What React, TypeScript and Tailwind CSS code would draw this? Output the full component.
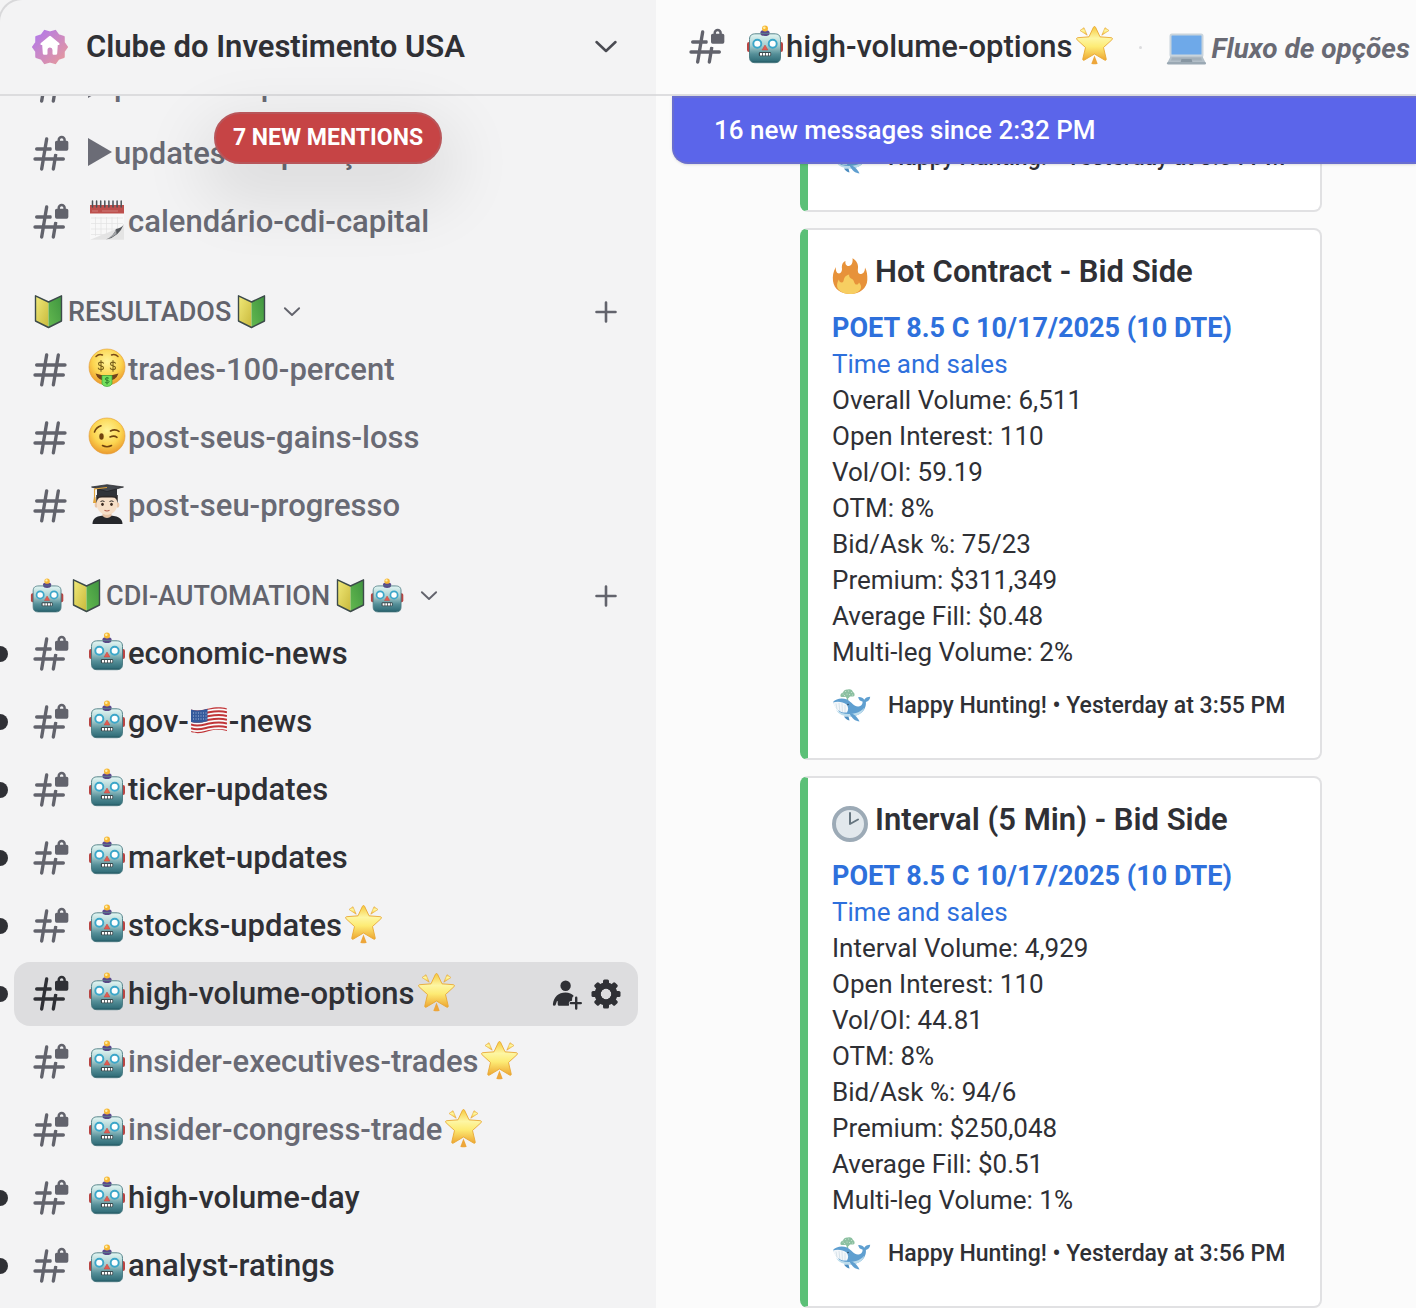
import type { ReactNode } from 'react';

type IconProps = { className?: string };

/* ---------- shared gradients ---------- */

function Gradients() {
  return (
    <svg aria-hidden="true" width="0" height="0" className="absolute">
      <defs>
        <linearGradient id="g-robot" x1="0" y1="0" x2="0" y2="1">
          <stop offset="0" stopColor="#e2f6f3" />
          <stop offset="0.4" stopColor="#a9cfd0" />
          <stop offset="0.7" stopColor="#558f98" />
          <stop offset="0.93" stopColor="#34707b" />
          <stop offset="1" stopColor="#1f525d" />
        </linearGradient>
        <linearGradient id="g-star" x1="0" y1="0" x2="0" y2="1">
          <stop offset="0" stopColor="#f6c93c" />
          <stop offset="0.35" stopColor="#fdf6a4" />
          <stop offset="0.6" stopColor="#fdeb74" />
          <stop offset="1" stopColor="#eda531" />
        </linearGradient>
        <radialGradient id="g-face" cx="0.5" cy="0.35" r="0.65">
          <stop offset="0" stopColor="#fff59a" />
          <stop offset="0.6" stopColor="#fcd550" />
          <stop offset="1" stopColor="#eb9a2d" />
        </radialGradient>
        <linearGradient id="g-leaf-l" x1="0" y1="0" x2="1" y2="1">
          <stop offset="0" stopColor="#f1ea79" />
          <stop offset="1" stopColor="#c9b93c" />
        </linearGradient>
        <linearGradient id="g-leaf-r" x1="1" y1="0" x2="0" y2="1">
          <stop offset="0" stopColor="#3f9440" />
          <stop offset="1" stopColor="#63b94f" />
        </linearGradient>
        <linearGradient id="g-badge" x1="0" y1="0" x2="1" y2="1">
          <stop offset="0.1" stopColor="#b57be6" />
          <stop offset="0.9" stopColor="#e397a0" />
        </linearGradient>
      </defs>
    </svg>
  );
}

/* ---------- interface icons ---------- */

function HashIcon({ className = '' }: IconProps) {
  return (
    <svg aria-hidden="true" viewBox="0 0 24 24" fill="currentColor" className={`size-10 shrink-0 ${className}`}>
      <path
        fillRule="evenodd"
        d="M10.99 3.16A1 1 0 1 0 9 2.84L8.15 8H4a1 1 0 0 0 0 2h3.82l-.67 4H3a1 1 0 1 0 0 2h3.82l-.8 4.84a1 1 0 0 0 1.97.32L8.85 16h4.97l-.8 4.84a1 1 0 0 0 1.97.32l.86-5.16H20a1 1 0 1 0 0-2h-3.82l.67-4H21a1 1 0 1 0 0-2h-3.82l.8-4.84a1 1 0 1 0-1.97-.32L15.15 8h-4.97l.8-4.84ZM14.15 14l.67-4H9.85l-.67 4h4.97Z"
      />
    </svg>
  );
}

function LockedHashIcon({ className = '' }: IconProps) {
  return (
    <svg aria-hidden="true" viewBox="0 0 24 24" fill="currentColor" className={`size-10 shrink-0 ${className}`}>
      <path
        fillRule="evenodd"
        d="M16 4h.5v-.5a2.5 2.5 0 0 1 5 0V4h.5a1 1 0 0 1 1 1v4a1 1 0 0 1-1 1h-6a1 1 0 0 1-1-1V5a1 1 0 0 1 1-1Zm4-.5V4h-2v-.5a1 1 0 1 1 2 0Z"
      />
      <path d="M12.5 8c.28 0 .5.22.5.5V9c0 .1 0 .2.02.31.03.34-.21.69-.56.69H9.85l-.67 4h4.97l.28-1.68c.06-.34.44-.52.77-.43a3 3 0 0 0 .8.11c.27 0 .47.24.43.5l-.25 1.5H20a1 1 0 1 1 0 2h-4.15l-.86 5.16a1 1 0 0 1-1.98-.32l.8-4.84H8.86l-.86 5.16A1 1 0 0 1 6 20.84L6.82 16H3a1 1 0 1 1 0-2h4.15l.67-4H4a1 1 0 1 1 0-2h4.15l.86-5.16a1 1 0 1 1 1.98.32L10.19 8h2.31Z" />
    </svg>
  );
}

function ChevronDown({ className = '' }: IconProps) {
  return (
    <svg aria-hidden="true" viewBox="0 0 24 24" fill="none" stroke="currentColor" strokeLinecap="round" strokeLinejoin="round" className={className}>
      <path d="M2.500 7L12 16L21.500 7" strokeWidth="2.500" />
    </svg>
  );
}

function PlusIcon({ className = '' }: IconProps) {
  return (
    <svg aria-hidden="true" viewBox="0 0 24 24" fill="none" stroke="currentColor" strokeLinecap="round" className={className}>
      <path d="M12 2.500V21.500M2.500 12H21.500" strokeWidth="2.600" />
    </svg>
  );
}

function InviteIcon() {
  return (
    <svg aria-hidden="true" viewBox="0 0 32 32" fill="currentColor" className="size-8">
      <circle cx="15.600" cy="7.700" r="5.200" />
      <path d="M15.500 14.500c-7 0-11.600 4.500-12.600 11.400-.1 1 .4 1.900 1.400 1.900.8 0 1.200-.4 1.500-1.200l1.100-3.300c.2-.5.8-.4.8.2v2.800c0 .9.600 1.500 1.500 1.500h8.800c1 0 1.300-.7 1-1.500-.6-1.700.3-3.200 2.300-3.200.5 0 .8-.3.800-.8v-1c0-1.700.8-2.800 1.700-3.200-1.800-2.300-4.600-3.600-8.300-3.600Z" />
      <path d="M26.200 19.700v10.800M20.800 25.100h10" fill="none" stroke="currentColor" strokeWidth="2.400" strokeLinecap="round" />
    </svg>
  );
}

function GearIcon() {
  return (
    <svg aria-hidden="true" viewBox="0 0 32 32" fill="currentColor" className="size-8">
      {[0, 45, 90, 135].map((angle) => (
        <rect key={angle} x="13" y="1.500" width="6" height="29" rx="1.500" transform={`rotate(${angle} 16 16)`} mask="url(#gear-hole)" />
      ))}
      <mask id="gear-hole" maskUnits="userSpaceOnUse" x="-8" y="-8" width="48" height="48">
        <rect x="-8" y="-8" width="48" height="48" fill="white" />
        <circle cx="16" cy="16" r="5.400" fill="black" />
      </mask>
      <circle cx="16" cy="16" r="8.400" fill="none" stroke="currentColor" strokeWidth="6" />
    </svg>
  );
}

const badgePoints = Array.from({ length: 20 }, (_, i) => {
  const radius = i % 2 === 0 ? 17 : 14.5;
  const angle = (i * Math.PI) / 10;
  return `${(18 + radius * Math.cos(angle)).toFixed(2)},${(18 + radius * Math.sin(angle)).toFixed(2)}`;
}).join(' ');

function ServerBadge() {
  return (
    <svg aria-hidden="true" viewBox="0 0 36 36" className="size-9 shrink-0">
      <polygon points={badgePoints} fill="url(#g-badge)" stroke="url(#g-badge)" strokeWidth="2" strokeLinejoin="round" />
      <path
        d="M17.100 7.200a1.300 1.300 0 0 1 1.800 0l8.200 6.700c.9.800.5 2.100-.7 2.100h-.6l-.6 8.400a1.500 1.500 0 0 1-1.500 1.400H21.500a1 1 0 0 1-1-1v-3.800a2.500 2.500 0 0 0-5 0v3.800a1 1 0 0 1-1 1h-2.200a1.500 1.500 0 0 1-1.500-1.400l-.6-8.400h-.6c-1.200 0-1.600-1.300-.7-2.100Z"
        fill="white"
      />
    </svg>
  );
}

/* ---------- emoji drawings ---------- */

function Robot({ className = 'size-10 -mt-1' }: IconProps) {
  return (
    <svg role="img" aria-label="robot" viewBox="0 0 40 40" className={`shrink-0 ${className}`}>
      <rect x="1" y="17" width="5" height="10" rx="2" fill="#b94543" />
      <rect x="32" y="17" width="5" height="10" rx="2" fill="#b94543" />
      <ellipse cx="19" cy="7.500" rx="4.600" ry="2.600" fill="#5b4a8c" />
      <circle cx="19" cy="3.500" r="3" fill="#f7b733" />
      <circle cx="18.300" cy="2.700" r="1.300" fill="#fff0a8" />
      <path d="M3.500 14.500c0-4.500 2.500-5.700 6.500-5.700h18c4 0 6.500 1.200 6.500 5.700v17.500c0 4.200-2 5.700-6 5.700h-19c-4 0-6-1.500-6-5.700Z" fill="url(#g-robot)" stroke="#477880" strokeWidth="0.900" />
      <path d="M14.500 9h9c-.5 1.500-2 2.100-4.500 2.100s-4-.6-4.500-2.100Z" fill="#584a86" />
      <circle cx="11.300" cy="18.800" r="4" fill="#fff" stroke="#3ba6c9" strokeWidth="1.900" />
      <circle cx="26.700" cy="18.800" r="4" fill="#fff" stroke="#3ba6c9" strokeWidth="1.900" />
      <path d="M19 20l2.900 5h-5.800Z" fill="#e35b51" stroke="#c4453f" strokeWidth="0.500" />
      <rect x="12.800" y="27" width="12.400" height="4.300" rx="1.400" fill="#39474b" />
      <path d="M14 29.200h2.200M17 29.200h2.200M20 29.200h2.200M23 29.200h1.300" stroke="#fff" strokeWidth="2.500" />
    </svg>
  );
}

function Star() {
  return (
    <svg role="img" aria-label="glowing star" viewBox="0 0 40 40" className="-mt-1 ml-0.5 size-10 shrink-0">
      <g fill="url(#g-star)" stroke="#e5a63a" strokeWidth="0.600" strokeLinejoin="round">
        <path d="M5 5.500L9 2.700l3.200 7.500Z" />
        <path d="M34 5.500L30 2.700l-3.200 7.500Z" />
      </g>
      <path d="M19.500 30.500l3.200 8.200q-3.200 1-6.400 0Z" fill="#eda63a" />
      <path
        d="M19.500 1.500c.7 0 1 .6 1.300 1.300l4.200 9 11.200.9c1.400.1 1.700 1.200.7 2.100l-8.400 7.700 2.700 11.300c.3 1.300-.6 1.900-1.700 1.200l-10-6-10 6c-1.100.7-2 .1-1.700-1.200l2.700-11.300-8.400-7.700c-1-.9-.7-2 .7-2.100l11.200-.9 4.200-9c.3-.7.6-1.300 1.300-1.300Z"
        fill="url(#g-star)"
        stroke="#e9a834"
        strokeWidth="0.900"
      />
    </svg>
  );
}

function Leaf() {
  return (
    <svg role="img" aria-label="beginner symbol" viewBox="0 0 36 36" className="size-9 shrink-0">
      <path d="M5.500 1.800L18.500 8v25.500L5.500 27Z" fill="url(#g-leaf-l)" />
      <path d="M31.500 1.800L18.500 8v25.500L31.500 27Z" fill="url(#g-leaf-r)" />
      <path d="M5.500 1.800L18.500 8 31.500 1.800V27l-13 6.500-13-6.500Z" fill="none" stroke="#3c4a4a" strokeWidth="1.400" strokeLinejoin="round" />
    </svg>
  );
}

function MoneyFace() {
  return (
    <svg role="img" aria-label="money-mouth face" viewBox="0 0 40 40" className="-mt-1 size-10 shrink-0">
      <circle cx="19" cy="19" r="18" fill="url(#g-face)" stroke="#e29a35" strokeWidth="0.600" />
      <path d="M8 8.500q3-3 6.500-1.500M23.500 7q3.500-1.500 6.500 1.500" fill="none" stroke="#7a4a16" strokeWidth="1.400" strokeLinecap="round" />
      <g fill="none" stroke="#7b611b" strokeWidth="1.100" strokeLinecap="round">
        <path d="M15.400 15.200c-.4-1.500-4.900-1.700-4.900.7s5 1.300 5 3.800-4.800 2.200-5.200.4M13 12.500v10.800" />
        <path d="M27.400 15.200c-.4-1.500-4.900-1.700-4.900.7s5 1.300 5 3.800-4.800 2.200-5.200.4M25 12.500v10.800" />
      </g>
      <path d="M7.500 25.500q11.500 4 23 0-2.500 7.500-11.500 7.500T7.500 25.500Z" fill="#74431a" />
      <path d="M14 27.500h10v8.500q-1.500 2.500-5 2.500T14 36Z" fill="#74e05d" stroke="#3fa63b" strokeWidth="0.700" />
      <path d="M21 30.500c-.6-1.200-4-1-3.800.6s3.900.9 3.900 2.500-3.500 1.800-4.100.4M19 29v7.500" fill="none" stroke="#2b7a2b" strokeWidth="0.900" />
    </svg>
  );
}

function WinkFace() {
  return (
    <svg role="img" aria-label="winking face" viewBox="0 0 40 40" className="-mt-1 size-10 shrink-0">
      <circle cx="19" cy="20" r="18" fill="url(#g-face)" stroke="#e29a35" strokeWidth="0.600" />
      <ellipse cx="13.500" cy="20.500" rx="2.200" ry="3.200" fill="#70430f" />
      <path d="M6.500 16q1.500-4.500 6.500-6.200M22.500 15q4.500-2.500 8.500.3M22 21q4-2 7 .3M14.500 29.500q4.500 2.500 9 0" fill="none" stroke="#70430f" strokeWidth="1.600" strokeLinecap="round" />
    </svg>
  );
}

function Graduate() {
  return (
    <svg role="img" aria-label="student" viewBox="0 0 40 40" className="-mt-1 size-10 shrink-0">
      <path d="M4.500 40c0-6 4-8.500 14.500-8.500S34.500 34 34.500 40Z" fill="#25272b" />
      <path d="M14.500 27h9v5q-4.500 4-9 0Z" fill="#e5c0a3" />
      <path d="M8.500 11h21v9h-21Z" fill="#2c2725" />
      <ellipse cx="8.300" cy="21" rx="1.700" ry="2.700" fill="#e9c7aa" />
      <ellipse cx="29.700" cy="21" rx="1.700" ry="2.700" fill="#e9c7aa" />
      <path d="M9 14q10-3 20 0v7c0 6-5 9.800-10 9.800S9 27 9 21Z" fill="#f6dfc8" />
      <path d="M8.500 18q1-3.500 3-4.500h15q2 1 3 4.500V11h-21Z" fill="#2c2725" />
      <path d="M12.500 17.500q2-1.200 4 0M21.500 17.500q2-1.200 4 0" stroke="#2c2725" strokeWidth="1" fill="none" />
      <ellipse cx="14.500" cy="20.300" rx="1.300" ry="1.600" fill="#3a2a20" />
      <ellipse cx="23.500" cy="20.300" rx="1.300" ry="1.600" fill="#3a2a20" />
      <path d="M16.500 26.300q2.500 1.400 5 0" stroke="#b3614f" strokeWidth="1.200" fill="none" />
      <path d="M9 5h20v8q-10-2.500-20 0Z" fill="#303338" />
      <path d="M3.500 3L19 .7 35.500 3 19 7.500Z" fill="#43474d" stroke="#1f2125" strokeWidth="0.700" />
      <path d="M19 3.500L6.500 5v9" stroke="#e0a33a" strokeWidth="1.100" fill="none" />
      <path d="M6 13l-1 6h3.200l-.8-6Z" fill="#e0a33a" />
    </svg>
  );
}

function Calendar() {
  return (
    <svg role="img" aria-label="spiral calendar" viewBox="0 0 40 40" className="-mt-1 size-10 shrink-0">
      <path d="M2 13h34v13q-4 9-16 14H2Z" fill="#f8f8f8" />
      <path d="M2 39.700h34V26Z" fill="#e4e4e4" />
      <path d="M7.500 17v19M13 17v19M18.500 17v19M24 17v16M29.500 17v12M3 18h32M3 23.500h32M3 29h29M3 34.500h23" stroke="#e2e2e2" strokeWidth="0.700" />
      <path d="M36 24q-2 4-8 5-2 7-10 10.600Q31 37 36 24Z" fill="#55585c" />
      <path d="M28 29q-2 7-10 10.600 6-1.800 10.500-5.500Z" fill="#a4a6a9" />
      <rect x="2" y="5" width="34" height="8.500" fill="#bd504d" />
      <path d="M4 11h6M14 11h16" stroke="#cf7d7a" strokeWidth="1.200" />
      <path d="M4.500 1v6M8.600 1v6M12.700 1v6M16.800 1v6M20.900 1v6M25 1v6M29.100 1v6M33.200 1v6" stroke="#4c5258" strokeWidth="1.500" strokeLinecap="round" />
    </svg>
  );
}

function FlagUS() {
  return (
    <svg role="img" aria-label="US flag" viewBox="0 0 40 40" className="-mt-1 size-10 shrink-0">
      <clipPath id="flag-wave">
        <path d="M2 9.500C9 12 15 9.500 20 8.500S31 6.500 38 8.500V31c-7-2-13-1.500-18 0S9 34.500 2 32Z" />
      </clipPath>
      <g clipPath="url(#flag-wave)">
        <rect width="40" height="40" fill="#fafafa" />
        {[0, 1, 2, 3, 4, 5, 6].map((n) => (
          <path key={n} transform={`translate(0 ${n * 3.75})`} d="M2 9.500C9 12 15 9.500 20 8.500S31 6.500 38 8.500" fill="none" stroke="#c03538" strokeWidth="2.100" />
        ))}
        <path d="M2 9c6 2 11 .8 16.500-.8v13C13 22.500 8 23.700 2 22Z" fill="#345a9c" />
        <path d="M4 13h14M4 16h14M4 19h14" stroke="#b9c8e2" strokeWidth="0.900" strokeDasharray="1 1.500" />
      </g>
    </svg>
  );
}

function Play() {
  return (
    <svg role="img" aria-label="play" viewBox="0 0 26 32" className="-mt-1 h-8 w-[26px] shrink-0">
      <path d="M0 2L24 16 0 30Z" fill="#6b6c76" />
    </svg>
  );
}

function Laptop() {
  return (
    <svg role="img" aria-label="laptop" viewBox="0 0 40 32" className="h-8 w-10 shrink-0">
      <rect x="3.500" y="0.500" width="34" height="24" rx="2.500" fill="#c9d4dc" />
      <rect x="5.500" y="2.500" width="30" height="19" rx="0.500" fill="#6ea9e9" />
      <path d="M4.500 23.500h32l3 6H1.500Z" fill="#b3bfc8" />
      <path d="M6 24.500h29l1 3H5Z" fill="#a3b0ba" />
      <path d="M15.500 26h10l1 3.500h-12Z" fill="#8796a2" />
      <rect x="1" y="29" width="39" height="2.500" rx="1.200" fill="#9aa8b3" />
    </svg>
  );
}

function Fire() {
  return (
    <svg role="img" aria-label="fire" viewBox="0 0 36 36" className="mt-2 size-9 shrink-0">
      <path d="M4 9C1 14 .5 18 1 23c1 8 8 13 17 13 10 0 17-6 17.300-14C35.500 17 35 13 33 9.500c0 4.500-2 6.500-4.500 6.500s-3-3-2.500-6C26.500 6 24 2 20.500.3 21 4 20 8 16.500 8 14 8 13 5.500 13.500 3 10.500 4 9.500 7.500 10 11c0 2-1 4.500-3 4.500C4.500 15.500 3.500 12 4 9Z" fill="#e7923a" />
      <path d="M18 36C11 36 6 32.500 5.200 29c-.5-3 .3-5.500 1.800-7.500 0 2 1.500 3.500 3.200 3 1.800-.6 1.300-3 2.300-4.700 1-1.800 2.500-2.800 4.700-3.300-.5 2.500.8 3.500 2.800 4.500 2.500 1.300 2 5 4 5.500 1.500.4 2.500-.5 3-2 1.800 2 2.500 4 1.800 6C27.500 34 23 36 18 36Z" fill="#f7ce61" />
    </svg>
  );
}

function Clock() {
  return (
    <svg role="img" aria-label="clock" viewBox="0 0 36 36" className="mt-2 size-9 shrink-0">
      <circle cx="18" cy="18" r="16" fill="#e2e8ec" stroke="#9caab6" strokeWidth="4" />
      <path d="M18 7v11l8-4.500" fill="none" stroke="#66757f" strokeWidth="2" strokeLinecap="round" strokeLinejoin="round" />
    </svg>
  );
}

function Whale() {
  return (
    <svg role="img" aria-label="whale" viewBox="0 0 40 40" className="size-10 shrink-0">
      <path d="M8.500 10.500c-.5-2 .8-3.500 2.500-4C11.500 4 14 3 16 3.500c2.500-.8 4.500.5 5 2.500 1.500.7 2 2.500 1.300 4-1.500.8-3.300.3-4.300.5l-1.300 1.500h-1.900L13.500 10.700c-2 .3-3.500.6-5-.2Z" fill="#8cc0a1" />
      <path d="M11 8h.1M13.500 5.500h.1M16.500 5h.1M19.500 6.500h.1M15 8h.1M17.500 8.500h.1M20.500 9h.1M12.500 9.500h.1" stroke="#c9e3d2" strokeWidth="1.100" strokeLinecap="round" />
      <rect x="14.700" y="10" width="1.500" height="4" fill="#8cc0a1" />
      <path d="M1 16c3-3.500 9-4.500 14-2.500 5 2.600 7 7.500 11.500 7 3.500-.4 4.300-3 4-5-2.300-.4-4-1.600-4.300-4.500 2.600-.3 5 .8 6 2.700 1.200-2 3-3 6-3-.2 3-1.900 4.600-4.300 5.200.5 5.500-2.500 10.500-8.500 13-3.500 1.400-8 1.600-11.500.8C8.900 28.400 4.400 23.700 1 16Z" fill="#5f9fd0" />
      <path d="M4 24c5 4 13 5 20 3 3-1 6-2.500 8.500-5.500-1.500 5-5.500 8-11.500 8.700-7 .9-13.500-.7-17-6.200Z" fill="#bcdcec" />
      <path d="M1 16.500c5-1.500 10-.5 13.500 2 2 2 2.200 5 .5 8-6 .8-12.500-3-14-10Z" fill="#f3f7fa" />
      <path d="M4 17.500l1 6M7 17l.8 8M10 17.300l.4 8.800M13 19v7" stroke="#cfdde6" strokeWidth="0.800" fill="none" />
      <path d="M17.500 27c3.500.5 8 3.500 10 8.500-4-.2-8-3-10-8.500Z" fill="#5f9fd0" />
      <path d="M12 30.500c1 1.800 3 3.500 5.500 4l-1-4Z" fill="#4c8dc0" />
      <circle cx="16" cy="18.500" r="0.800" fill="#2c4a63" />
    </svg>
  );
}

/* ---------- sidebar ---------- */

type Channel = {
  id: string;
  label: ReactNode;
  open?: boolean;
  unread?: boolean;
  selected?: boolean;
};

const topChannels: Channel[] = [
  { id: 'portfolio', label: <><Play />portfolio-update</> },
  { id: 'updates', label: <><Play />updates-de-posições</> },
  { id: 'calendario', label: <><Calendar />calendário-cdi-capital</> },
];

const resultChannels: Channel[] = [
  { id: 'trades', open: true, label: <><MoneyFace />trades-100-percent</> },
  { id: 'gains', open: true, label: <><WinkFace />post-seus-gains-loss</> },
  { id: 'progresso', open: true, label: <><Graduate />post-seu-progresso</> },
];

const automationChannels: Channel[] = [
  { id: 'economic', unread: true, label: <><Robot />economic-news</> },
  { id: 'gov', unread: true, label: <><Robot />gov-<FlagUS />-news</> },
  { id: 'ticker', unread: true, label: <><Robot />ticker-updates</> },
  { id: 'market', unread: true, label: <><Robot />market-updates</> },
  { id: 'stocks', unread: true, label: <><Robot />stocks-updates<Star /></> },
  { id: 'options', unread: true, selected: true, label: <><Robot />high-volume-options<Star /></> },
  { id: 'executives', label: <><Robot />insider-executives-trades<Star /></> },
  { id: 'congress', label: <><Robot />insider-congress-trade<Star /></> },
  { id: 'day', unread: true, label: <><Robot />high-volume-day</> },
  { id: 'analyst', unread: true, label: <><Robot />analyst-ratings</> },
];

function ChannelRow({ channel }: { channel: Channel }) {
  const { id, label, open, unread, selected } = channel;
  const Icon = open ? HashIcon : LockedHashIcon;
  return (
    <li className="relative py-0.5 pr-[18px] pl-3.5">
      {unread && <span className="absolute top-1/2 left-0 h-4 w-2 -translate-y-1/2 rounded-r-full bg-[#2f3035]" />}
      <div className={`flex h-16 items-center rounded-2xl pr-4 ${selected ? 'bg-[#dddddf]' : ''}`}>
        <a
          href={`#${id}`}
          aria-current={selected ? 'page' : undefined}
          className={`flex h-full min-w-0 flex-1 items-center gap-[18px] pl-4 ${unread ? 'text-[#2f3035]' : 'text-[#696a74]'}`}
        >
          <Icon className={selected ? 'text-[#2f3035]' : 'text-[#62636c]'} />
          <span className="flex items-center text-[31px] font-medium whitespace-nowrap">{label}</span>
        </a>
        {selected && (
          <div className="flex gap-2 text-[#2f3035]">
            <button type="button" aria-label="Create invite"><InviteIcon /></button>
            <button type="button" aria-label="Edit channel"><GearIcon /></button>
          </div>
        )}
      </div>
    </li>
  );
}

function CategoryHeader({ name, children }: { name: string; children: ReactNode }) {
  return (
    <div className="flex h-20 items-center pt-8 pr-8 pl-[30px] text-[#62636c]">
      <button type="button" className="flex items-center gap-0.5 text-[27px] font-medium whitespace-nowrap">
        {children}
        <ChevronDown className="ml-3 size-[18px]" />
      </button>
      <button type="button" aria-label={`Create channel in ${name}`} className="ml-auto p-1.5">
        <PlusIcon className="size-6" />
      </button>
    </div>
  );
}

function ChannelList({ channels }: { channels: Channel[] }) {
  return (
    <ul>
      {channels.map((channel) => (
        <ChannelRow key={channel.id} channel={channel} />
      ))}
    </ul>
  );
}

function Sidebar() {
  return (
    <aside className="relative flex w-[656px] shrink-0 flex-col bg-[#f3f3f4]">
      <span aria-hidden="true" className="absolute -top-0.5 -left-0.5 size-6 rounded-tl-3xl border-t-2 border-l-2 border-[#d8d8da]" />
      <header className="flex h-24 shrink-0 items-center border-b-2 border-[#dcdcde] pr-[38px] pl-8">
        <ServerBadge />
        <h1 className="ml-[18px] text-[31px] font-semibold text-[#2f3035]">Clube do Investimento USA</h1>
        <button type="button" aria-label="Server menu" className="ml-auto text-[#4a4b52]">
          <ChevronDown className="size-6" />
        </button>
      </header>
      <div className="relative min-h-0 flex-1">
        <nav aria-label="Channels" className="h-full overflow-hidden">
          <div className="-mt-11">
            <ChannelList channels={topChannels} />
            <CategoryHeader name="RESULTADOS">
              <Leaf />RESULTADOS<Leaf />
            </CategoryHeader>
            <ChannelList channels={resultChannels} />
            <CategoryHeader name="CDI-AUTOMATION">
              <Robot className="size-9" /><Leaf />CDI-AUTOMATION<Leaf /><Robot className="size-9" />
            </CategoryHeader>
            <ChannelList channels={automationChannels} />
          </div>
        </nav>
        <div className="absolute inset-x-0 top-4 flex justify-center">
          <button
            type="button"
            className="h-[52px] rounded-full border-2 border-[#b8565a] bg-[#c64445] px-[17px] text-[23px] font-bold text-white shadow-[0_24px_64px_16px_rgba(0,0,0,0.09)]"
          >
            7 NEW MENTIONS
          </button>
        </div>
      </div>
    </aside>
  );
}

/* ---------- messages ---------- */

type Alert = {
  time: string;
  icon?: ReactNode;
  title?: string;
  lines?: string[];
};

const alerts: Alert[] = [
  { time: '3:54 PM' },
  {
    time: '3:55 PM',
    icon: <Fire />,
    title: 'Hot Contract - Bid Side',
    lines: ['Overall Volume: 6,511', 'Open Interest: 110', 'Vol/OI: 59.19', 'OTM: 8%', 'Bid/Ask %: 75/23', 'Premium: $311,349', 'Average Fill: $0.48', 'Multi-leg Volume: 2%'],
  },
  {
    time: '3:56 PM',
    icon: <Clock />,
    title: 'Interval (5 Min) - Bid Side',
    lines: ['Interval Volume: 4,929', 'Open Interest: 110', 'Vol/OI: 44.81', 'OTM: 8%', 'Bid/Ask %: 94/6', 'Premium: $250,048', 'Average Fill: $0.51', 'Multi-leg Volume: 1%'],
  },
];

function AlertCard({ alert }: { alert: Alert }) {
  return (
    <article className="w-[522px] shrink-0 overflow-hidden rounded-lg border-2 border-l-8 border-[#e1e1e3] border-l-[#5bc077] bg-white pt-6 pr-6 pb-8 pl-6 text-[#2f3035]">
      {alert.title && (
        <>
          <h2 className="flex h-9 items-center gap-[7px] text-[31px] font-semibold whitespace-nowrap">
            {alert.icon}
            {alert.title}
          </h2>
          <div className="mt-5 mb-4 text-[26px] leading-9">
            <a href="#contract" className="block text-[27px] font-bold text-[#2e70dc]">POET 8.5 C 10/17/2025 (10 DTE)</a>
            <a href="#sales" className="block text-[#2e70dc]">Time and sales</a>
            {alert.lines?.map((line) => (
              <p key={line}>{line}</p>
            ))}
          </div>
        </>
      )}
      <footer className="flex h-10 items-center gap-4 text-[23px] font-medium whitespace-nowrap">
        <Whale />
        Happy Hunting! • Yesterday at {alert.time}
      </footer>
    </article>
  );
}

function ChannelView() {
  return (
    <main className="flex min-w-0 flex-1 flex-col bg-[#fbfbfb]">
      <header className="flex h-24 shrink-0 items-center overflow-hidden border-b-2 border-[#dedee0] pl-[30px] whitespace-nowrap">
        <LockedHashIcon className="text-[#62636c]" />
        <h2 className="ml-5 flex items-center text-[31px] font-medium text-[#2f3035]">
          <Robot />high-volume-options<Star />
        </h2>
        <span aria-hidden="true" className="mx-6 size-[3px] shrink-0 rounded-full bg-[#dcdcde]" />
        <p className="flex items-center gap-1.5 pt-1 text-[28px] font-bold text-[#696a74] italic">
          <Laptop />Fluxo de opções
        </p>
      </header>
      <div className="relative min-h-0 flex-1">
        <section aria-label="Messages" className="flex h-full flex-col justify-end gap-4 overflow-hidden pl-36">
          {alerts.map((alert) => (
            <AlertCard key={alert.time} alert={alert} />
          ))}
        </section>
        <button
          type="button"
          className="absolute top-0 right-0 left-4 h-[68px] rounded-bl-2xl border-y-2 border-l-2 border-[#686dd0] bg-[#5b65ea] pl-10 text-left text-[26px] font-medium text-white shadow-sm"
        >
          16 new messages since 2:32 PM
        </button>
      </div>
    </main>
  );
}

export default function App() {
  return (
    <div className="flex h-screen overflow-hidden font-['Roboto',sans-serif]">
      <Gradients />
      <Sidebar />
      <ChannelView />
    </div>
  );
}
